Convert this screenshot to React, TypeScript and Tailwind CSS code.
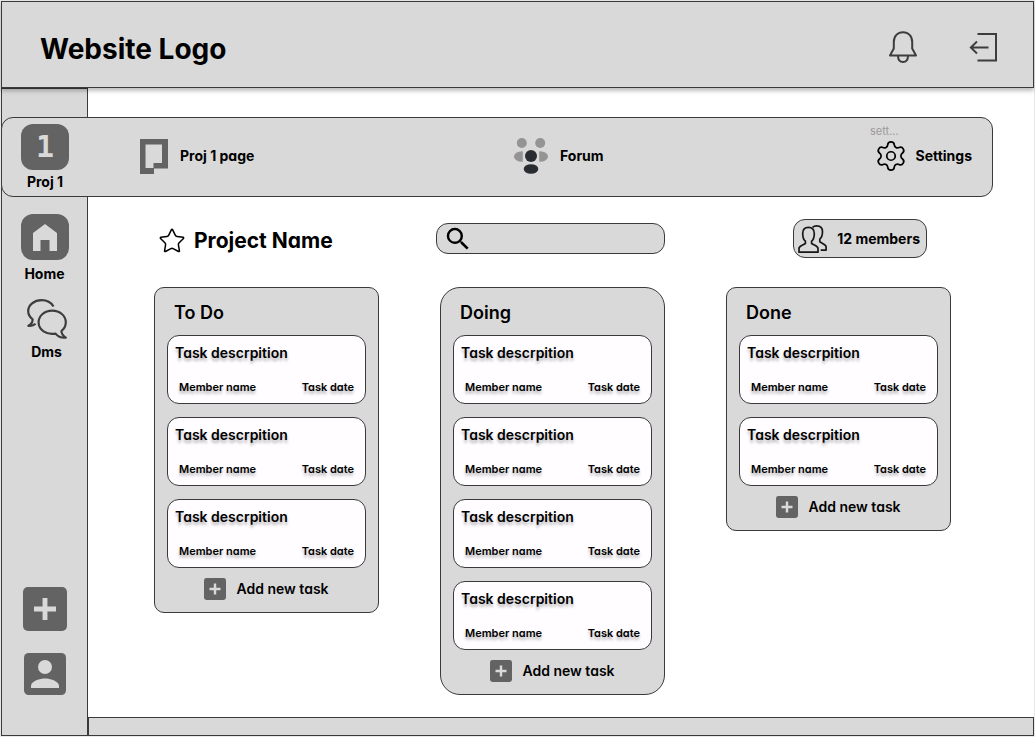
import type { ReactNode } from "react";
import { Settings, Star } from "lucide-react";
import { MdSearch } from "react-icons/md";

type BoardData = { title: string; tasks: number; shape: string };

const boards: BoardData[] = [
  { title: "To Do", tasks: 3, shape: "rounded-[10px]" },
  { title: "Doing", tasks: 4, shape: "rounded-[20px]" },
  { title: "Done", tasks: 2, shape: "rounded-[10px]" },
];

function BellIcon() {
  return (
    <svg className="h-8 w-7" viewBox="0 0 28 32" fill="none" stroke="#3d3d3d" strokeWidth="2" strokeLinejoin="round" aria-hidden="true">
      <path d="M1 24.500h26l-3.800-7V11C23.200 5 19.400 1.200 14 1.200S4.800 5 4.800 11v6.500z" />
      <path d="M9 24.800c0 4 2 6.200 5 6.200s5-2.200 5-6.200" />
    </svg>
  );
}

function LogoutIcon() {
  return (
    <svg className="h-[30px] w-7" viewBox="0 0 28 30" fill="none" stroke="#3d3d3d" strokeWidth="2" aria-hidden="true">
      <path d="M8.500 2H27v26.500H8.500" />
      <path d="M19.500 15.500H1.500M8 9.500l-6.200 6L8 21.500" strokeWidth="1.900" />
    </svg>
  );
}

function PageIcon() {
  return (
    <svg className="h-9 w-7" viewBox="0 0 28 36" aria-hidden="true">
      <path fill="#636363" fillRule="evenodd" d="M0 1h28v29.500H14V36H0zM5.500 6.500v23.500h8V25H22V6.500z" />
    </svg>
  );
}

function ForumIcon() {
  return (
    <svg className="h-9 w-[34px]" viewBox="0 0 34 36" aria-hidden="true">
      <g fill="#949494">
        <circle cx="7.800" cy="5" r="5" />
        <circle cx="26.200" cy="5" r="5" />
        <ellipse cx="8" cy="18.500" rx="8" ry="5.200" />
        <ellipse cx="26" cy="18.500" rx="8" ry="5.200" />
      </g>
      <rect x="8.800" y="12" width="16.400" height="14" fill="#d9d9d9" />
      <ellipse cx="17" cy="18" rx="6" ry="6" fill="#292d32" />
      <ellipse cx="17" cy="31" rx="7.300" ry="4.800" fill="#292d32" />
    </svg>
  );
}

function HomeIcon() {
  return (
    <svg className="h-[27px] w-6" viewBox="0 0 24 27" aria-hidden="true">
      <path fill="#d9d9d9" d="M12 0l12 9v18h-7.500V16h-9v11H0V9z" />
    </svg>
  );
}

function ChatIcon() {
  return (
    <svg className="h-10 w-10" viewBox="0 0 40 40" fill="none" stroke="#3d3d3d" strokeWidth="2.200" strokeLinejoin="round" aria-hidden="true">
      <path d="M26.500 7.500C24.200 3.600 19.800 1.200 14.600 1.200 7.200 1.200 1.200 6 1.200 12c0 3.600 1.700 6.300 4.400 8.300.2 2.700-1.400 5-4.200 6.500 3 .4 5.500-.4 7.200-2" />
      <path d="M25.200 11.600c7.600 0 13.600 5.200 13.600 11.700 0 3.700-1.700 6.600-4.400 8.700.2 2.800 1.600 4.900 4.400 6.700-4.500.4-7.800-1-10.200-4.100-9.400 1.600-17-3.700-17-11.300 0-6.500 6-11.700 13.600-11.700z" />
    </svg>
  );
}

function MembersIcon() {
  return (
    <svg className="h-7 w-[29px]" viewBox="0 0 29 28" fill="none" stroke="#171717" strokeWidth="1.700" strokeLinejoin="round" aria-hidden="true">
      <path d="M1 27.200h19v-3.700c0-2.300-3.200-2.900-6.400-5v-2.300c2-1.600 2.700-4 2.700-7.700 0-3.900-2.200-6.200-5.800-6.200S4.700 4.600 4.700 8.500c0 3.700.7 6.100 2.700 7.700v2.300c-3.200 2.100-6.400 2.700-6.400 5z" />
      <path d="M14.500 2.300c1-.9 2.500-1.400 4.300-1.400 3.600 0 5.700 2.300 5.700 5.900 0 3.500-.8 5.800-2.700 7.400v2.600c3.200 2.100 6.300 2.700 6.300 5v3.300h-5.400" />
    </svg>
  );
}

function AddIcon({ size }: { size: string }) {
  return (
    <svg className={size} viewBox="0 0 18 18" aria-hidden="true">
      <rect width="18" height="18" rx="2" fill="#636363" />
      <path fill="#d9d9d9" d="M8 4.500h2V8h3.500v2H10v3.500H8V10H4.500V8H8z" />
    </svg>
  );
}

function AccountIcon() {
  return (
    <svg className="size-[42px]" viewBox="0 0 18 18" aria-hidden="true">
      <rect width="18" height="18" rx="2" fill="#636363" />
      <g fill="#d9d9d9">
        <circle cx="9" cy="6" r="3" />
        <path d="M3 14c0-2 4-3.100 6-3.100s6 1.100 6 3.100v1H3z" />
      </g>
    </svg>
  );
}

function Tile({ children }: { children: ReactNode }) {
  return (
    <span className="flex h-[46px] w-12 items-center justify-center rounded-[12px] bg-[#636363]">
      {children}
    </span>
  );
}

function TaskCard() {
  return (
    <li className="flex h-[69px] flex-col justify-between rounded-[12px] border border-[#3a3a3a] bg-[#fffdff] px-[11px] pt-[7px] pb-2 [text-shadow:0_3px_3px_rgba(0,0,0,0.3)]">
      <h3 className="-ml-1 text-sm leading-5">Task descrpition</h3>
      <div className="flex justify-between text-[11px] leading-4">
        <span>Member name</span>
        <span>Task date</span>
      </div>
    </li>
  );
}

function Board({ title, tasks, shape }: BoardData) {
  return (
    <section className={`border border-[#3a3a3a] bg-[#d9d9d9] px-3 pb-3 ${shape}`}>
      <h2 className="px-[7px] pt-[13px] pb-2.5 text-lg leading-6">{title}</h2>
      <ul className="flex flex-col gap-[13px]">
        {Array.from({ length: tasks }, (_, i) => (
          <TaskCard key={i} />
        ))}
      </ul>
      <button className="mx-auto mt-2.5 flex items-center gap-2.5 text-sm leading-[22px]">
        <AddIcon size="size-[22px]" />
        Add new task
      </button>
    </section>
  );
}

export default function App() {
  return (
    <div className="flex min-h-screen flex-col bg-[#e8e8e8] p-px font-['Inter','Noto_Sans',sans-serif] font-semibold text-black [font-feature-settings:'cv11']">
      <header className="z-10 flex h-[87px] items-center justify-between border border-[#3a3a3a] bg-[#d9d9d9] pt-1 pr-9 pl-[38px] shadow-[0_3px_4px_rgba(0,0,0,0.25)]">
        <h1 className="pt-1 text-[28px] leading-9 font-bold">Website Logo</h1>
        <div className="flex items-center gap-[52px]">
          <button aria-label="Notifications"><BellIcon /></button>
          <button aria-label="Log out"><LogoutIcon /></button>
        </div>
      </header>

      <div className="grid flex-1 grid-cols-[87px_1fr] grid-rows-[29px_80px_1fr_19px] bg-white">
        <aside className="col-start-1 row-span-4 row-start-1 flex flex-col items-center border border-[#3a3a3a] bg-[#d9d9d9] pt-[125px] pb-10 text-sm leading-5 font-bold">
          <a href="#home" className="flex flex-col items-center gap-1">
            <Tile><HomeIcon /></Tile>
            Home
          </a>
          <a href="#dms" className="mt-[15px] ml-1 flex flex-col items-center gap-[3px]">
            <ChatIcon />
            Dms
          </a>
          <div className="mt-auto flex flex-col items-center gap-[22px] pt-8">
            <button aria-label="Add project"><AddIcon size="size-11" /></button>
            <button aria-label="Account"><AccountIcon /></button>
          </div>
        </aside>

        <div className="col-span-2 col-start-1 row-start-2 mr-[41px] flex rounded-[12px] border border-[#3a3a3a] bg-[#d9d9d9] pr-5 text-sm leading-5 font-bold">
          <a href="#project" className="flex w-[86px] shrink-0 flex-col items-center gap-0.5 pt-1.5">
            <Tile>
              <span className="font-['DejaVu_Sans_Mono',monospace] text-[30px] leading-8 font-bold text-[#d9d9d9]">1</span>
            </Tile>
            Proj 1
          </a>
          <nav className="grid flex-1 grid-cols-[374fr_360fr_98px] items-center pb-0.5 pl-[52px]">
            <a href="#page" className="flex items-center gap-3"><PageIcon />Proj 1 page</a>
            <a href="#forum" className="flex items-center gap-3"><ForumIcon />Forum</a>
            <a href="#settings" className="relative flex items-center justify-end gap-2">
              <Settings className="size-[34px] shrink-0" strokeWidth={1.2} />
              Settings
              <span className="absolute -top-4 -left-1 text-[11px] leading-4 font-normal text-[#9a9a9a]">sett...</span>
            </a>
          </nav>
        </div>

        <main className="col-start-2 row-start-3 pt-[22px] pr-[83px] pb-[22px] pl-[66px]">
          <div className="grid h-[39px] grid-cols-3 items-center gap-[61px]">
            <div className="flex items-center gap-2 pt-1 pl-1 whitespace-nowrap">
              <button aria-label="Favourite project"><Star className="size-7" strokeWidth={1.3} /></button>
              <h2 className="text-[21px] leading-7 font-bold">Project Name</h2>
            </div>
            <label className="-ml-1 flex h-[31px] items-center rounded-[12px] border border-[#3a3a3a] bg-[#d9d9d9] px-1.5">
              <MdSearch className="size-[30px] shrink-0" />
              <input type="search" aria-label="Search tasks" className="w-full min-w-0 bg-transparent text-sm outline-none" />
            </label>
            <button className="mr-6 flex h-[39px] items-center gap-2.5 justify-self-end rounded-[12px] border border-[#3a3a3a] bg-[#d9d9d9] pr-1.5 pl-1 text-sm font-bold whitespace-nowrap">
              <MembersIcon />
              12 members
            </button>
          </div>
          <div className="mt-[29px] grid grid-cols-3 items-start gap-[61px]">
            {boards.map((board) => (
              <Board key={board.title} {...board} />
            ))}
          </div>
        </main>
        <footer className="col-start-2 row-start-4 border border-[#3a3a3a] bg-[#d9d9d9]" />
      </div>
    </div>
  );
}
